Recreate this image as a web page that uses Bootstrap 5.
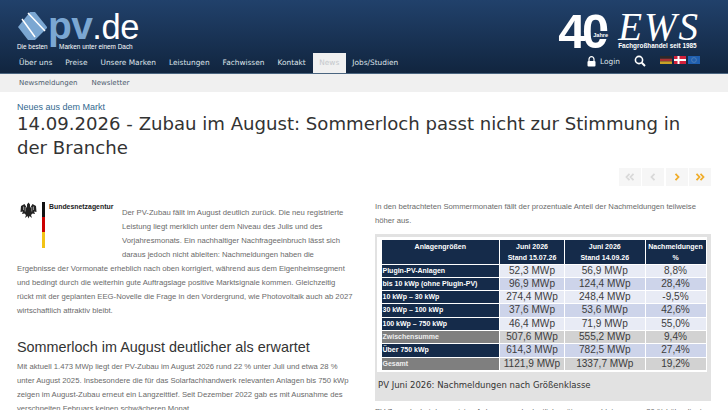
<!DOCTYPE html>
<html lang="de">
<head>
  <meta charset="UTF-8" />
  <meta name="viewport" content="width=device-width, initial-scale=1.0"/>
  <title>pv.de News</title>

  <link href="https://cdn.jsdelivr.net/npm/bootstrap@5.3.3/dist/css/bootstrap.min.css" rel="stylesheet">

  <style>
    html, body { height: 410px; overflow: hidden; }
    body {
      margin: 0;
      background: #fff;
      font-family: "Liberation Sans", sans-serif;
      color: #666;
    }

    .site-head {
      height: 74px;
      background: linear-gradient(#21416b, #11253f);
      border-bottom: 1px solid #4a6580;
      padding: 0 28px 0 17px;
    }
    .head-top { height: 53px; flex: none; }

    .logo-box { width: 120px; padding-top: 10px; }
    .logo-line { height: 32px; }
    .logo-text {
      font-size: 34.5px;
      line-height: 32px;
      letter-spacing: -.4px;
      color: #fff;
      margin-left: -1px;
    }
    .logo-text b { color: #7ba7d2; font-weight: 700; font-size: 39px; letter-spacing: -.6px; }
    .logo-tag {
      font-size: 6.4px;
      line-height: 8px;
      color: #fff;
      white-space: nowrap;
      margin-top: 1px;
    }
    .logo-gap { display: inline-block; width: 8px; }

    .ews-box { padding-top: 9px; color: #fff; }
    .big-40 {
      font-size: 49px;
      font-weight: 700;
      line-height: 44px;
      letter-spacing: -3.5px;
      width: 52px;
    }
    .jahre {
      top: 22px;
      left: 34px;
      font-size: 5.6px;
      font-weight: 700;
      letter-spacing: 0;
      line-height: 8px;
      background: #1b3557;
      padding: 0 1px;
    }
    .ews-name {
      font-family: "Liberation Serif", serif;
      font-style: italic;
      font-size: 39px;
      line-height: 30px;
      letter-spacing: 2px;
      margin-top: 3px;
    }
    .ews-sub { font-size: 6.4px; font-weight: 700; line-height: 8px; white-space: nowrap; }

    .main-nav { height: 20px; font-family: "DejaVu Sans", sans-serif; font-size: 7.4px; margin-left: -4.5px; }
    .main-nav a { color: #dfe4ea; text-decoration: none; }
    .main-nav .nav-item-x { padding: 0 6.5px; line-height: 20px; }
    .main-nav .on { background: #f0f0f0; margin-left: .5px; }
    .main-nav .on a { color: #c4c8cc; }

    .nav-tools { color: #dfe4ea; margin-top: -3px; }
    .tool-search { margin-left: 14px; margin-top: -2px; }
    .flag { width: 12px; height: 8px; display: block; margin-left: 2px; margin-top: -3px; }
    .flag.first { margin-left: 14px; }

    .sub-nav {
      height: 18px;
      background: #f0f0f0;
      font-family: "DejaVu Sans", sans-serif;
      font-size: 7px;
      padding: 1px 0 0 19px;
      gap: 14px;
    }
    .sub-nav a { color: #4b5b6e; text-decoration: none; }

    .page-wrap { padding: 0 17px; }
    .kicker { font-size: 9px; line-height: 11px; color: #33698f; margin-top: 10px; }
    .art-title {
      font-family: "DejaVu Sans", sans-serif;
      font-size: 18.1px;
      font-weight: 400;
      line-height: 24px;
      color: #333;
      margin: -1px 0 0;
    }
    .pager-row { gap: 1.5px; margin-top: 8px; height: 18px; }
    .pager-btn {
      width: 22px;
      height: 18px;
      background: #f6f6f6;
      color: #d9d9d9;
    }
    .pager-btn.live { color: #f0ad2a; }
    .pager-btn svg { width: 10px; height: 8px; }

    .art-cols { gap: 22px; margin-top: 14px; }
    .art-col { width: 336px; flex: none; }
    .art-text { font-size: 7.7px; line-height: 14px; margin: 0; color: #6a6a6a; }
    .lead-text { padding-top: 6px; }
    .bnetz { float: left; width: 105px; height: 62px; padding: 2px 0 0 3px; }
    .bnetz-name { font-size: 6.9px; font-weight: 700; line-height: 9px; color: #222; white-space: nowrap; }
    .eagle { width: 17px; height: 17px; display: block; }
    .flag-bar { width: 3px; height: 46px; background: linear-gradient(#111 33%, #c00 33%, #c00 66%, #f2c315 66%); margin-left: 1px; }
    .sec-title { font-size: 14.4px; font-weight: 400; line-height: 19px; color: #333; margin: 20px 0 3px; }

    .fig-box { background: #e2e2e2; padding: 3px 4px 0 2px; margin-top: 6px; height: 167px; }
    .fig-inner { background: #fff; padding: 1.5px .5px 1px 3.5px; }
    .fig-table { border-collapse: separate; border-spacing: 1.5px; width: 100%; table-layout: fixed; }
    .fig-table th {
      background: #152b4a;
      color: #fff;
      font-size: 7px;
      line-height: 11px;
      text-align: center;
      font-weight: 700;
      vertical-align: top;
      white-space: nowrap;
    }
    .fig-table td {
      font-size: 10.1px;
      line-height: 12.3px;
      text-align: center;
      color: #3d3d3d;
      padding: 0;
    }
    .fig-table td.lab {
      background: #152b4a;
      color: #fff;
      font-size: 7px;
      font-weight: 700;
      text-align: left;
      padding-left: 1px;
      white-space: nowrap;
    }
    .row-a td { background: #e8ebf5; }
    .row-b td { background: #cdd4ea; }
    .row-g td { background: #d2d2d2; }
    .row-g td.lab { background: #7f7f7f; color: #eee; }
    .col-a { width: 117.5px; }
    .col-b { width: 64px; }
    .col-c { width: 79.5px; }
    .fig-cap {
      font-family: "DejaVu Sans", sans-serif;
      font-size: 8.5px;
      line-height: 12px;
      color: #333;
      margin: 7px 0 0 1px;
    }
    .after-fig { margin-top: 4px; }
  </style>
</head>
<body>

<header class="site-head d-flex flex-column">
  <div class="head-top d-flex justify-content-between">
    <div class="logo-box">
      <div class="logo-line d-flex align-items-center">
        <svg width="32" height="30" viewBox="0 0 32 30" class="flex-shrink-0">
          <polygon points="13,1 18,1 30,16 30,17 18,29 11,29 1,16" fill="#7ba7d2"/>
          <path d="M5 8 L18 26 M11 2 L28 20" stroke="#fff" stroke-width="1.5" fill="none"/>
        </svg>
        <div class="logo-text"><b>pv</b>.de</div>
      </div>
      <div class="logo-tag">Die besten <span class="logo-gap"></span> Marken unter einem Dach</div>
    </div>

    <div class="ews-box d-flex">
      <div class="big-40 position-relative">40<span class="jahre position-absolute">Jahre</span></div>
      <div class="ms-2">
        <div class="ews-name">EWS</div>
        <div class="ews-sub">Fachgroßhandel seit 1985</div>
      </div>
    </div>
  </div>

  <nav class="main-nav d-flex justify-content-between">
    <div class="d-flex">
      <div class="nav-item-x"><a href="#">Über uns</a></div>
      <div class="nav-item-x"><a href="#">Preise</a></div>
      <div class="nav-item-x"><a href="#">Unsere Marken</a></div>
      <div class="nav-item-x"><a href="#">Leistungen</a></div>
      <div class="nav-item-x"><a href="#">Fachwissen</a></div>
      <div class="nav-item-x"><a href="#">Kontakt</a></div>
      <div class="nav-item-x on"><a href="#">News</a></div>
      <div class="nav-item-x"><a href="#">Jobs/Studien</a></div>
    </div>
    <div class="nav-tools d-flex align-items-center">
      <svg width="9" height="11" viewBox="0 0 9 11"><path d="M2 5V3.2a2.5 2.5 0 0 1 5 0V5" stroke="#fff" stroke-width="1.2" fill="none"/><rect x="0.5" y="5" width="8" height="5.5" rx="1" fill="#fff"/></svg>
      <span class="ms-1">Login</span>
      <svg width="12" height="12" viewBox="0 0 12 12" class="tool-search"><circle cx="5" cy="5" r="3.6" stroke="#fff" stroke-width="1.6" fill="none"/><path d="M7.8 7.8 11 11" stroke="#fff" stroke-width="2"/></svg>
      <svg class="flag first" viewBox="0 0 12 8"><rect width="12" height="2.7" fill="#2a2a2a"/><rect y="2.7" width="12" height="2.7" fill="#a33"/><rect y="5.4" width="12" height="2.6" fill="#c9a227"/></svg>
      <svg class="flag" viewBox="0 0 12 8"><rect width="12" height="8" fill="#d3213c"/><rect x="3.5" width="2" height="8" fill="#fff"/><rect y="3" width="12" height="2" fill="#fff"/></svg>
      <svg class="flag" viewBox="0 0 12 8"><rect width="12" height="8" fill="#1f5fb0"/><circle cx="6" cy="4" r="2.4" fill="none" stroke="#6c8fb5" stroke-width=".6"/></svg>
    </div>
  </nav>
</header>

<div class="sub-nav d-flex align-items-center">
  <a href="#">Newsmeldungen</a>
  <a href="#">Newsletter</a>
</div>

<main class="page-wrap">
  <div class="kicker">Neues aus dem Markt</div>
  <h1 class="art-title">14.09.2026 - Zubau im August: Sommerloch passt nicht zur Stimmung in der Branche</h1>

  <div class="pager-row d-flex justify-content-end">
    <div class="pager-btn d-flex align-items-center justify-content-center"><svg viewBox="0 0 10 8"><path d="M4.5 .8 1.5 4l3 3.2M8.5 .8 5.5 4l3 3.2" fill="none" stroke="currentColor" stroke-width="1.8"/></svg></div>
    <div class="pager-btn d-flex align-items-center justify-content-center"><svg viewBox="0 0 10 8"><path d="M6.5 .8 3.5 4l3 3.2" fill="none" stroke="currentColor" stroke-width="1.8"/></svg></div>
    <div class="pager-btn live d-flex align-items-center justify-content-center"><svg viewBox="0 0 10 8"><path d="M3.5 .8 6.5 4l-3 3.2" fill="none" stroke="currentColor" stroke-width="1.8"/></svg></div>
    <div class="pager-btn live d-flex align-items-center justify-content-center"><svg viewBox="0 0 10 8"><path d="M1.5 .8 4.5 4l-3 3.2M5.5 .8 8.5 4l-3 3.2" fill="none" stroke="currentColor" stroke-width="1.8"/></svg></div>
  </div>

  <div class="art-cols d-flex">
    <div class="art-col">
      <div class="bnetz d-flex gap-1">
        <svg class="eagle flex-shrink-0" viewBox="0 0 17 17">
          <path d="M8.5 0.5 10 2.5 10 6 12.5 2 16 4 16.5 10 14 9.5 15 12 12.5 11.5 11 13 12 16 9.5 14 8.5 16.5 7.5 14 5 16 6 13 4.5 11.5 2 12 3 9.5 0.5 10 1 4 4.5 2 7 6 7 2.5Z" fill="#222"/>
          <path d="M3.5 4.5V8M5.2 5V9.5M13.5 4.5V8M11.8 5V9.5" stroke="#fff" stroke-width=".5"/>
        </svg>
        <div class="flag-bar flex-shrink-0"></div>
        <div class="bnetz-name">Bundesnetzagentur</div>
      </div>
      <p class="art-text lead-text">Der PV-Zubau fällt im August deutlich zurück. Die neu registrierte Leistung liegt merklich unter dem Niveau des Julis und des Vorjahresmonats. Ein nachhaltiger Nachfrageeinbruch lässt sich daraus jedoch nicht ableiten: Nachmeldungen haben die Ergebnisse der Vormonate erheblich nach oben korrigiert, während aus dem Eigenheimsegment und bedingt durch die weiterhin gute Auftragslage positive Marktsignale kommen. Gleichzeitig rückt mit der geplanten EEG-Novelle die Frage in den Vordergrund, wie Photovoltaik auch ab 2027 wirtschaftlich attraktiv bleibt.</p>
      <h2 class="sec-title">Sommerloch im August deutlicher als erwartet</h2>
      <p class="art-text">Mit aktuell 1.473 MWp liegt der PV-Zubau im August 2026 rund 22 % unter Juli und etwa 28 % unter August 2025. Insbesondere die für das Solarfachhandwerk relevanten Anlagen bis 750 kWp zeigen im August-Zubau erneut ein Langzeittief. Seit Dezember 2022 gab es mit Ausnahme des verschneiten Februars keinen schwächeren Monat.</p>
    </div>

    <div class="art-col">
      <p class="art-text">In den betrachteten Sommermonaten fällt der prozentuale Anteil der Nachmeldungen teilweise höher aus.</p>
      <figure class="fig-box mb-0 mx-0">
        <div class="fig-inner">
          <table class="fig-table">
            <colgroup><col class="col-a"><col class="col-b"><col class="col-c"><col></colgroup>
            <thead>
              <tr><th>Anlagengrößen</th><th>Juni 2026<br>Stand 15.07.26</th><th>Juni 2026<br>Stand 14.09.26</th><th>Nachmeldungen<br>%</th></tr>
            </thead>
            <tbody>
              <tr class="row-a"><td class="lab">Plugin-PV-Anlagen</td><td>52,3 MWp</td><td>56,9 MWp</td><td>8,8%</td></tr>
              <tr class="row-b"><td class="lab">bis 10 kWp (ohne Plugin-PV)</td><td>96,9 MWp</td><td>124,4 MWp</td><td>28,4%</td></tr>
              <tr class="row-a"><td class="lab">10 kWp – 30 kWp</td><td>274,4 MWp</td><td>248,4 MWp</td><td>-9,5%</td></tr>
              <tr class="row-b"><td class="lab">30 kWp – 100 kWp</td><td>37,6 MWp</td><td>53,6 MWp</td><td>42,6%</td></tr>
              <tr class="row-a"><td class="lab">100 kWp – 750 kWp</td><td>46,4 MWp</td><td>71,9 MWp</td><td>55,0%</td></tr>
              <tr class="row-g"><td class="lab">Zwischensumme</td><td>507,6 MWp</td><td>555,2 MWp</td><td>9,4%</td></tr>
              <tr class="row-b"><td class="lab">Über 750 kWp</td><td>614,3 MWp</td><td>782,5 MWp</td><td>27,4%</td></tr>
              <tr class="row-g"><td class="lab">Gesamt</td><td>1121,9 MWp</td><td>1337,7 MWp</td><td>19,2%</td></tr>
            </tbody>
          </table>
        </div>
        <figcaption class="fig-cap">PV Juni 2026: Nachmeldungen nach Größenklasse</figcaption>
      </figure>
      <p class="art-text after-fig">PV-Zuwachs bei den meisten Anlagen wurde deutlich später gemeldet, was um 20 % höher liegt.</p>
    </div>
  </div>
</main>

<script src="https://cdn.jsdelivr.net/npm/bootstrap@5.3.3/dist/js/bootstrap.bundle.min.js"></script>
</body>
</html>
